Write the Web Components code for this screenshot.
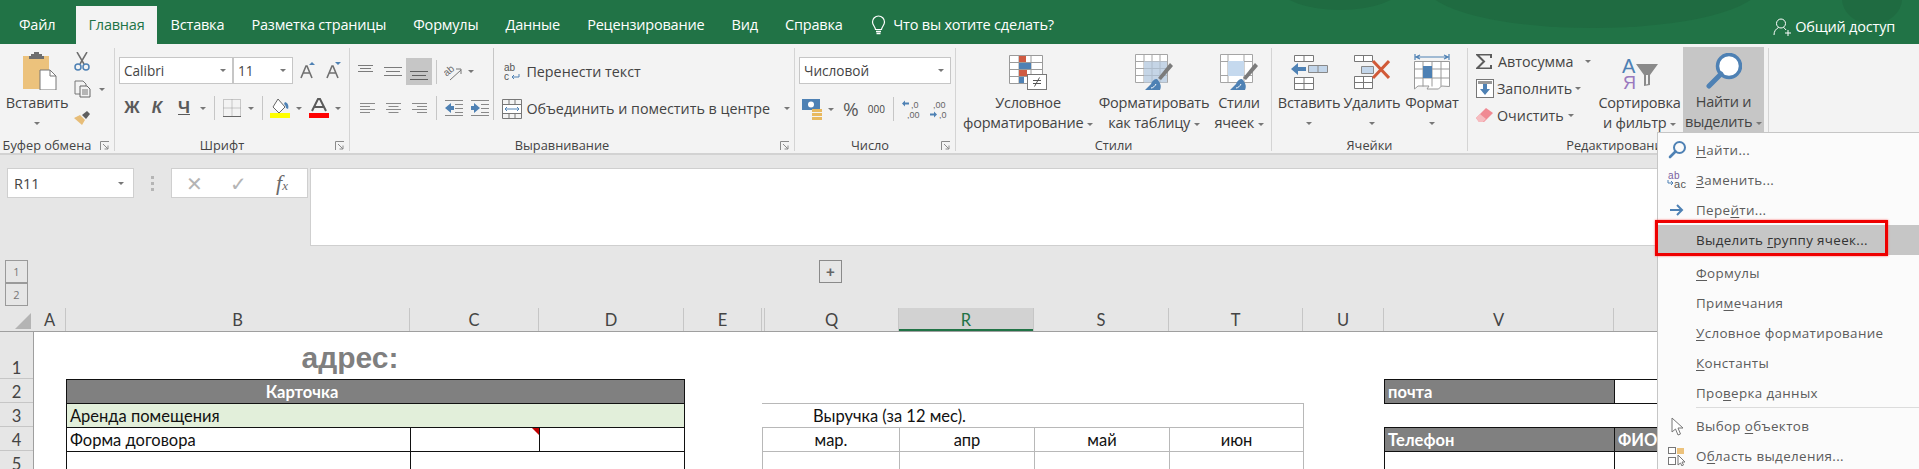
<!DOCTYPE html>
<html lang="ru">
<head>
<meta charset="utf-8">
<title>Excel</title>
<style>
  html, body { margin: 0; height: 469px; overflow: hidden; background: #e6e6e6; }
  body { font-family: "Open Sans", "Noto Sans", sans-serif; }
</style>
</head>
<body>
<xl-app></xl-app>
<script>
// small icon set, each entry is viewbox + svg body
const BLUE = '#4e81b4', LT = '#c3d6ea';
const ICONS = {
  paste: ['0 0 36 38', `<rect x="1" y="4" width="26" height="33" fill="#ecc27c"/><path d="M9 4V2h3V0h5v2h3v2h2v3H7V4z" fill="#6e6e6e"/><path d="M18 18h10l6 6v14H18z" fill="#fff" stroke="#777"/><path d="M28 18v6h6" fill="none" stroke="#777"/>`],
  cut: ['0 0 16 19', `<path d="M3 0l7 12M13 0L6 12" stroke="#6e6e6e" stroke-width="1.5" fill="none"/><circle cx="4" cy="15" r="3" fill="none" stroke="${BLUE}" stroke-width="1.5"/><circle cx="12" cy="15" r="3" fill="none" stroke="${BLUE}" stroke-width="1.5"/>`],
  copy: ['0 0 17 18', `<path d="M1 1h8l3 3v10H1z" fill="none" stroke="#777"/><path d="M6 6h7l3 3v8H6z" fill="#f3f3f3" stroke="#666"/><path d="M8 10h6M8 12h6M8 14h6" stroke="#777"/>`],
  brush: ['0 0 18 16', `<path d="M0 9l6-3 5 5-3 5z" fill="#e7bd78"/><path d="M8 6l5-4 3 3-4 5z" fill="#5f5f5f"/>`],
  grow: ['0 0 16 17', `<path d="M12 0l3 3H9z" fill="${BLUE}"/><path d="M1 16L6 4h1l5 12M3.500 11h6" fill="none" stroke="#707070" stroke-width="1.600"/>`],
  shrink: ['0 0 16 17', `<path d="M9 0h6l-3 3z" fill="${BLUE}"/><path d="M1 16L6 4h1l5 12M3.500 11h6" fill="none" stroke="#707070" stroke-width="1.600"/>`],
  borders: ['0 0 18 18', `<path d="M.5.500h17v17H.5z" fill="none" stroke="#9a9a9a" stroke-dasharray="1 1"/><path d="M9 .5v17M.5 9h17" stroke="#9a9a9a" stroke-dasharray="1 1"/><path d="M0 17.500h18" stroke="#666"/>`],
  fill: ['0 0 20 21', `<path d="M8 1l7 8-6 6-6-6z" fill="#fff" stroke="#666"/><path d="M15 4c3 1 4 4 3 7l-2-1c0-2-1-3-2-4z" fill="${BLUE}"/><rect y="15" width="20" height="5" fill="#ffff00"/>`],
  color: ['0 0 20 21', `<path d="M3 13L9 1h2l6 12M5.500 9h9" fill="none" stroke="#5a5a5a" stroke-width="2"/><rect y="15" width="20" height="5" fill="#ff0000"/>`],
  atop: ['0 0 15 8', `<path d="M0 1.500h15M2 4.500h11M0 7.500h15" stroke="#7b7b7b"/>`],
  amid: ['0 0 18 12', `<path d="M0 1.500h18M2 5.500h14M0 9.500h18" stroke="#7b7b7b"/>`],
  abot: ['0 0 18 12', `<path d="M0 1.500h18M2 5.500h14M0 9.500h18" stroke="#5f5f5f"/>`],
  orient: ['0 0 19 18', `<text x="0" y="11" font-size="10" font-family="Liberation Sans" fill="#666" transform="rotate(-40 5 9)">ab</text><path d="M6 17l11-10M12 6h5v5" fill="none" stroke="#777"/>`],
  aleft: ['0 0 15 11', `<path d="M0 .5h15M0 3.500h10M0 6.500h15M0 9.500h10" stroke="#8a8a8a"/>`],
  acenter: ['0 0 15 11', `<path d="M0 .5h15M2.500 3.500h10M0 6.500h15M2.500 9.500h10" stroke="#8a8a8a"/>`],
  aright: ['0 0 15 11', `<path d="M0 .5h15M5 3.500h10M0 6.500h15M5 9.500h10" stroke="#8a8a8a"/>`],
  outdent: ['0 0 18 16', `<path d="M0 8l6-5v3h3v4H6v3z" fill="${BLUE}"/><path d="M0 .5h18M10 4.500h8M10 8.500h8M10 12.500h8M0 15.500h18" stroke="#888"/>`],
  indent: ['0 0 18 16', `<path d="M9 8L3 3v3H0v4h3v3z" fill="${BLUE}"/><path d="M0 .5h18M10 4.500h8M10 8.500h8M10 12.500h8M0 15.500h18" stroke="#888"/>`],
  wrap: ['0 0 16 18', `<text x="0" y="8" font-size="10" font-family="Liberation Sans" fill="#555">ab</text><text x="0" y="17" font-size="10" font-family="Liberation Sans" fill="#555">c</text><path d="M15 11v3H8M10 12l-2 2 2 2" fill="none" stroke="${BLUE}"/>`],
  merge: ['0 0 20 20', `<path d="M.5.500h19v19H.5zM.5 5.500h19M.5 14.500h19M7 .5v5M13 .5v5M7 14.500v5M13 14.500v5" fill="none" stroke="#777"/><rect x="1" y="6" width="18" height="8" fill="#fff"/><path d="M3 10h14M5 8l-2 2 2 2M15 8l2 2-2 2" fill="none" stroke="${BLUE}"/>`],
  money: ['0 0 21 21', `<rect width="18" height="11" fill="${BLUE}"/><circle cx="9" cy="5.500" r="3" fill="#fff"/><rect x="10" y="10" width="10" height="3" fill="#e8b95f"/><rect x="10" y="14" width="10" height="3" fill="#e8b95f"/><rect x="10" y="18" width="10" height="3" fill="#e8b95f"/>`],
  decdec: ['0 0 18 19', `<path d="M0 3.500l3-3v2h4v2H3v2z" fill="${BLUE}"/><text x="9" y="8" font-size="9" font-family="Liberation Sans" fill="#666">,0</text><text x="5" y="18" font-size="9" font-family="Liberation Sans" fill="#666">,00</text>`],
  incdec: ['0 0 18 19', `<path d="M7 14.500l-3-3v2H0v2h4v2z" fill="${BLUE}"/><text x="3" y="8" font-size="9" font-family="Liberation Sans" fill="#666">,00</text><text x="9" y="18" font-size="9" font-family="Liberation Sans" fill="#666">,0</text>`],
  cond: ['0 0 38 35', `<path d="M.5.500h33v28H.5zM10 .5v28M22 .5v28M.5 7.500h33M.5 14.500h33M.5 21.500h33" fill="#fff" stroke="#9a9a9a"/><rect x="10" y="1" width="7" height="6" fill="#cf5b42"/><rect x="10" y="8" width="12" height="6" fill="${BLUE}"/><rect x="10" y="15" width="8" height="6" fill="#cf5b42"/><rect x="10" y="22" width="5" height="6" fill="${BLUE}"/><rect x="18.500" y="19.500" width="19" height="15" fill="#fff" stroke="#777"/><path d="M24 25.500h8M24 28.500h8M30.500 22.500l-5 9" stroke="#555" fill="none"/>`],
  table: ['0 0 38 36', `<path d="M.5.500h32v28H.5zM9 .5v28M17 .5v28M25 .5v28M.5 7.500h32M.5 14.500h32M.5 21.500h32" fill="#fff" stroke="#a5a5a5"/><path d="M9 7.500h23v21H9z" fill="#c5d5e6"/><path d="M17 7.500v21M25 7.500v21M9 14.500h23M9 21.500h23" stroke="#aebccb"/><path d="M38 12L26 26l-3-2 12-15z" fill="#7b7b7b"/><path d="M22 25c-3 0-5 2-6 5l-6 6h15c2-4 0-8-3-11z" fill="${BLUE}"/><path d="M16 34c2 0 4-2 5-4" stroke="#fff" fill="none"/>`],
  cellstyle: ['0 0 38 36', `<path d="M.5.500h32v28H.5zM8 .5v28M24 .5v28M.5 7.500h32M.5 21.500h32" fill="#fff" stroke="#a5a5a5"/><rect x="8" y="7" width="16" height="15" fill="#c5d9ee"/><path d="M38 12L26 26l-3-2 12-15z" fill="#7b7b7b"/><path d="M22 25c-3 0-5 2-6 5l-6 6h15c2-4 0-8-3-11z" fill="${BLUE}"/><path d="M16 34c2 0 4-2 5-4" stroke="#fff" fill="none"/>`],
  cellins: ['0 0 37 35', `<path d="M3.500.500h19v6h-19zM13 .5v6M3.500 22.500h19v12h-19zM3.500 28.500h19M13 22.500v12" fill="#fff" stroke="#777"/><path d="M0 14l7-6v4h8v4H7v4z" fill="${BLUE}"/><path d="M17.500 10.500h19v7h-19zM27 10.500v7" fill="${LT}" stroke="#888"/>`],
  celldel: ['0 0 36 35', `<path d="M.5.500h18v6H.5zM9.500.500v6M.5 21.500h18v12H.5zM.5 27.500h18M9.500 21.500v12" fill="#fff" stroke="#777"/><path d="M7.500 11.500h12v7h-12z" fill="${LT}" stroke="#888"/><path d="M19 6l16 17M35 6L19 23" stroke="#d15a38" stroke-width="3"/>`],
  cellfmt: ['0 0 36 38', `<path d="M1 2v6M35 2v6M2 5h32M6 3L2 5l4 2M30 3l4 2-4 2" fill="none" stroke="${BLUE}" stroke-width="1.200"/><path d="M.5 9.500h35v25l-8-.5-3 3H13l2-3H4l-3.500 3zM9 9.500v25M18 9.500v25M27 9.500v25M.5 17h35M.5 26h35" fill="#fff" stroke="#999"/><rect x="9" y="14" width="9" height="12" fill="${BLUE}"/>`],
  sigma: ['0 0 16 15', `<path d="M15 4V.5H1L8 7.500 1 14.500h14V11" fill="none" stroke="#5c5c5c" stroke-width="2"/>`],
  filldown: ['0 0 18 19', `<rect x=".5" y=".5" width="17" height="18" fill="#fff" stroke="#777"/><rect x="2" y="2" width="14" height="3" fill="#999"/><path d="M9 16l-5-6h3V5h4v5h3z" fill="${BLUE}"/>`],
  eraser: ['0 0 17 15', `<path d="M0 10L10 0l7 5-9 9H3z" fill="#f08a93"/><path d="M0 10l4-4 6 5-3 3H3z" fill="#f6bcc0"/>`],
  sort: ['0 0 37 33', `<text x="1" y="16" font-size="20" font-family="Liberation Sans" fill="${BLUE}">А</text><text x="2" y="32" font-size="18" font-family="Liberation Sans" fill="#9a79be">Я</text><path d="M15 7h22l-8 11v10l-6 1V18z" fill="#8a8a8a"/><path d="M25 18h2v9l-2 .5z" fill="#f3f3f3"/>`],
  find: ['0 0 36 36', `<circle cx="23" cy="13" r="11.500" fill="#fff" stroke="${BLUE}" stroke-width="3.500"/><path d="M15 21L3 33" stroke="${BLUE}" stroke-width="5" stroke-linecap="round"/>`],
  findsm: ['0 0 18 18', `<circle cx="11.500" cy="6.500" r="5.500" fill="none" stroke="${BLUE}" stroke-width="2"/><path d="M7.500 10.500L2 16" stroke="${BLUE}" stroke-width="2.600" stroke-linecap="round"/>`],
  replace: ['0 0 20 18', `<text x="1" y="7.500" font-size="10" font-family="Liberation Sans" fill="#7a5fa0">ab</text><text x="7" y="17" font-size="11" font-family="Liberation Sans" fill="#555">ac</text><path d="M1 9v3h5M4 10l2 2-2 2" fill="none" stroke="${BLUE}"/>`],
  arrow: ['0 0 14 12', `<path d="M0 6h12M7 1l5 5-5 5" fill="none" stroke="${BLUE}" stroke-width="2"/>`],
  pointer: ['0 0 13 19', `<path d="M1 1v14l3.500-3 2.500 6 2.500-1-2.500-6h5z" fill="#fff" stroke="#777"/>`],
  selpane: ['0 0 18 19', `<rect x=".5" y=".5" width="7" height="6" fill="#fff" stroke="#777"/><rect x="9" y="1" width="7" height="6" fill="#ecc27c"/><rect x=".5" y="10.500" width="7" height="7" fill="#fff" stroke="#777"/><path d="M10 8v10l2.500-2 1.500 3 1.500-1-1.500-3h3z" fill="#fff" stroke="#777"/>`],
  bulb: ['0 0 15 20', `<path d="M7.500 1A6 6 0 0 0 1.500 7c0 3 2.500 4.500 3 7.500h6c.5-3 3-4.500 3-7.500a6 6 0 0 0-6-6z" fill="none" stroke="#fff" stroke-width="1.200"/><path d="M5 16.500h5M5.500 18.500h4" stroke="#fff" stroke-width="1.300"/>`],
  person: ['0 0 18 18', `<circle cx="8" cy="5.500" r="4.500" fill="none" stroke="#fff"/><path d="M1 17c0-4 2-6 4.500-7.500M10.500 9.500c1 .5 2 1.500 2.500 2.500M12 15h6M15 12v6" fill="none" stroke="#fff"/>`],
  launcher: ['0 0 10 10', `<path d="M.5 9V.5H9M3 3l5 5M8 4.500V8H4.500" fill="none" stroke="#8a8a8a"/>`]
};

class XlIcon extends HTMLElement {
  connectedCallback() {
    const [vb, body] = ICONS[this.getAttribute('name')];
    const [, , w, h] = vb.split(' ');
    this.attachShadow({ mode: 'open' }).innerHTML = `
      <style>:host { display: inline-flex; flex: none; } svg { display: block; }</style>
      <svg xmlns="http://www.w3.org/2000/svg" viewBox="${vb}" width="${w}" height="${h}">${body}</svg>`;
  }
}

class XlDrop extends HTMLElement {
  connectedCallback() {
    this.attachShadow({ mode: 'open' }).innerHTML = `
      <style>:host { display: inline-block; flex: none; width: 0; height: 0; border: 3px solid transparent; border-top: 3px solid #777; border-bottom: 0; vertical-align: middle; }</style>`;
  }
}

class XlTitlebar extends HTMLElement {
  connectedCallback() {
    this.attachShadow({ mode: 'open' }).innerHTML = `
      <style>
        :host { display: flex; height: 44px; background: #217346; color: #fff; font: 14.5px/1 "Open Sans", sans-serif; position: relative; overflow: hidden; align-items: flex-end; letter-spacing: -.2px; }
        .tab { height: 38px; display: flex; align-items: center; padding: 0 13.6px; box-sizing: border-box; white-space: nowrap; position: relative; }
        .on { background: #f3f3f3; color: #217346; width: 81px; justify-content: center; padding: 0; }
        .file { width: 76px; padding: 0 0 0 19px; }
        .tell { display: flex; align-items: center; gap: 7px; margin-left: 15px; height: 38px; white-space: nowrap; position: relative; }
        .blob { position: absolute; background: #1f6b41; border-radius: 50%; }
        .share { margin-left: auto; display: flex; align-items: center; gap: 4px; height: 34px; padding-right: 24px; position: relative; }
      </style>
      <div class="blob" style="left:1426px;top:-56px;width:334px;height:84px"></div>
      <div class="blob" style="left:1280px;top:-34px;width:120px;height:44px"></div>
      <div class="blob" style="left:1842px;top:-26px;width:60px;height:50px"></div>
      <div class="tab file">Файл</div><div class="tab on">Главная</div>
      <div class="tab">Вставка</div><div class="tab">Разметка страницы</div><div class="tab">Формулы</div>
      <div class="tab">Данные</div><div class="tab">Рецензирование</div><div class="tab">Вид</div><div class="tab">Справка</div>
      <div class="tell"><xl-icon name="bulb"></xl-icon>Что вы хотите сделать?</div>
      <div class="share"><xl-icon name="person"></xl-icon>Общий доступ</div>`;
  }
}

// one ribbon group: content slot on top, caption below and the thin divider on its right
class XlGroup extends HTMLElement {
  connectedCallback() {
    const launcher = this.hasAttribute('launcher');
    this.attachShadow({ mode: 'open' }).innerHTML = `
      <style>
        :host { display: flex; flex-direction: column; flex: none; box-sizing: border-box; position: relative; height: 103px; margin-top: 4px; border-right: 1px solid #d4d4d4; }
        .body { flex: 1; display: flex; min-height: 0; }
        .cap { height: 14px; margin-bottom: -1px; display: flex; align-items: center; justify-content: center; font-size: 12.8px; color: #444; white-space: nowrap; }
        xl-icon { position: absolute; right: 4px; bottom: 0; }
      </style>
      <div class="body"><slot></slot></div>
      <div class="cap" style="padding-right:${this.getAttribute('pad') || 0}px">${this.getAttribute('label')}</div>
      ${launcher ? '<xl-icon name="launcher"></xl-icon>' : ''}`;
  }
}

// tall ribbon button: icon, then one or two text lines, then optional arrow line
class XlBig extends HTMLElement {
  connectedCallback() {
    const lines = this.getAttribute('text').split('|');
    const on = this.hasAttribute('on');
    const below = this.hasAttribute('below');
    const labels = lines.map((t, i) => {
      const last = i === lines.length - 1;
      return `<div class="ln">${t}${last && !below ? ' <xl-drop></xl-drop>' : ''}</div>`;
    }).join('');
    this.attachShadow({ mode: 'open' }).innerHTML = `
      <style>
        :host { display: flex; flex-direction: column; align-items: center; flex: none; box-sizing: border-box; width: var(--w, 60px); height: 85px; color: #444; font-size: 14.5px; letter-spacing: -.2px; background: ${on ? '#c6c6c6' : 'transparent'}; }
        .ic { height: 45px; display: flex; align-items: flex-end; justify-content: center; padding-bottom: 3px; box-sizing: border-box; flex: none; }
        .ln { height: 20px; line-height: 20px; white-space: nowrap; text-align: center; flex: none; }
        .dr { height: 20px; display: flex; align-items: center; }
      </style>
      <div class="ic"><slot></slot></div>${labels}
      ${below ? '<div class="dr"><xl-drop></xl-drop></div>' : ''}`;
  }
}

class XlCombo extends HTMLElement {
  connectedCallback() {
    this.attachShadow({ mode: 'open' }).innerHTML = `
      <style>
        :host { display: flex; align-items: center; justify-content: space-between; box-sizing: border-box; height: 27px; background: #fff; border: 1px solid #c6c6c6; padding: 0 6px 0 4px; font-size: 13.6px; color: #444; width: var(--w, 100px); flex: none; }
      </style>
      <span><slot></slot></span><xl-drop></xl-drop>`;
  }
}

class XlTool extends HTMLElement {
  connectedCallback() {
    this.attachShadow({ mode: 'open' }).innerHTML = `
      <style>
        :host { display: flex; align-items: center; justify-content: center; flex: none; box-sizing: border-box; height: var(--h, 26px); min-width: var(--w, 0); color: #444; }
        :host([on]) { background: #c6c6c6; }
      </style><slot></slot>`;
  }
}

class XlSep extends HTMLElement {
  connectedCallback() {
    this.attachShadow({ mode: 'open' }).innerHTML = `
      <style>:host { display: block; width: 1px; height: var(--h, 24px); background: #c6c6c6; flex: none; margin: 0 var(--m, 8px); }</style>`;
  }
}

class XlRibbon extends HTMLElement {
  connectedCallback() {
    this.attachShadow({ mode: 'open' }).innerHTML = `
      <style>
        :host { display: flex; height: 111px; box-sizing: border-box; background: #f3f3f3; border-bottom: 2px solid #d2d2d2; color: #444; font-size: 14.3px; }
        .col { display: flex; flex-direction: column; }
        .row { display: flex; align-items: center; }
        .btn { font-weight: bold; font-family: "Liberation Sans", sans-serif; font-size: 17px; color: #5a5a5a; text-align: center; }
        .lbl { white-space: nowrap; color: #444; }
      </style>
      <xl-group label="Буфер обмена" launcher pad="20" style="width:115px">
        <div class="row" style="align-items:flex-start;width:114px">
          <xl-big text="Вставить" below style="--w:74px"><xl-icon name="paste" style="margin-left:5px"></xl-icon></xl-big>
          <div class="col" style="gap:10px;padding-top:4px">
            <xl-tool style="--h:18px;justify-content:flex-start"><xl-icon name="cut"></xl-icon></xl-tool>
            <xl-tool style="--h:18px;justify-content:flex-start"><xl-icon name="copy"></xl-icon><xl-drop style="margin-left:8px"></xl-drop></xl-tool>
            <xl-tool style="--h:18px;justify-content:flex-start"><xl-icon name="brush"></xl-icon></xl-tool>
          </div>
        </div>
      </xl-group>
      <xl-group label="Шрифт" launcher pad="20" style="width:235px">
        <div class="col" style="padding:9px 0 0 4px;gap:12px;width:230px">
          <div class="row">
            <xl-combo style="--w:114px">Calibri</xl-combo><xl-combo style="--w:60px">11</xl-combo>
            <xl-tool style="--w:26px;margin-left:2px"><xl-icon name="grow"></xl-icon></xl-tool>
            <xl-tool style="--w:26px"><xl-icon name="shrink"></xl-icon></xl-tool>
          </div>
          <div class="row">
            <span class="btn" style="width:26px">Ж</span>
            <span class="btn" style="width:24px;font-style:italic">К</span>
            <span class="btn" style="width:30px;text-decoration:underline">Ч</span>
            <xl-drop style="margin-left:1px"></xl-drop>
            <xl-sep></xl-sep>
            <xl-icon name="borders"></xl-icon><xl-drop style="margin-left:7px"></xl-drop>
            <xl-sep style="--m:7px;margin-left:8px"></xl-sep>
            <xl-icon name="fill"></xl-icon><xl-drop style="margin-left:6px"></xl-drop>
            <xl-icon name="color" style="margin-left:7px"></xl-icon><xl-drop style="margin-left:6px"></xl-drop>
          </div>
        </div>
      </xl-group>
      <xl-group label="Выравнивание" launcher pad="20" style="width:445px">
        <div class="row" style="align-items:flex-start;width:440px">
          <div class="col" style="padding:10px 0 0 2px;gap:10px;width:147px;box-sizing:border-box;border-right:1px solid #c6c6c6;height:72px">
            <div class="row">
              <xl-tool style="--w:26px"><xl-icon name="atop" style="margin-top:-8px"></xl-icon></xl-tool>
              <xl-tool style="--w:26px;margin-left:2px"><xl-icon name="amid"></xl-icon></xl-tool>
              <xl-tool on style="--w:26px;--h:27px"><xl-icon name="abot" style="margin-top:8px"></xl-icon></xl-tool>
              <xl-sep style="--m:4px"></xl-sep>
              <xl-icon name="orient" style="margin-left:3px"></xl-icon><xl-drop style="margin-left:5px"></xl-drop>
            </div>
            <div class="row" style="padding-left:2px">
              <xl-tool style="--w:26px"><xl-icon name="aleft"></xl-icon></xl-tool>
              <xl-tool style="--w:26px"><xl-icon name="acenter"></xl-icon></xl-tool>
              <xl-tool style="--w:26px"><xl-icon name="aright"></xl-icon></xl-tool>
              <xl-sep style="--m:4px"></xl-sep>
              <xl-icon name="outdent" style="margin-left:4px"></xl-icon>
              <xl-icon name="indent" style="margin-left:8px"></xl-icon>
            </div>
          </div>
          <div class="col" style="padding:10px 0 0 8px;gap:10px">
            <div class="row lbl" style="height:27px;gap:6px;padding-left:2px"><xl-icon name="wrap"></xl-icon>Перенести текст</div>
            <div class="row lbl" style="height:27px;gap:4px"><xl-icon name="merge"></xl-icon>Объединить и поместить в центре<xl-drop style="margin-left:10px"></xl-drop></div>
          </div>
        </div>
      </xl-group>
      <xl-group label="Число" launcher pad="10" style="width:161px">
        <div class="col" style="padding:9px 0 0 4px;gap:12px;width:156px">
          <xl-combo style="--w:152px">Числовой</xl-combo>
          <div class="row" style="padding-left:3px">
            <xl-icon name="money"></xl-icon><xl-drop style="margin-left:5px"></xl-drop>
            <span class="lbl" style="font-size:19px;margin-left:9px;color:#5a5a5a">%</span>
            <span class="lbl" style="font-size:10px;margin-left:9px">000</span>
            <xl-sep></xl-sep>
            <xl-icon name="decdec"></xl-icon><xl-icon name="incdec" style="margin-left:10px"></xl-icon>
          </div>
        </div>
      </xl-group>
      <xl-group label="Стили" style="width:316px">
        <div class="row" style="align-items:flex-start;width:315px">
          <xl-big text="Условное|форматирование" style="--w:144px"><xl-icon name="cond"></xl-icon></xl-big>
          <xl-big text="Форматировать|как таблицу" style="--w:108px"><xl-icon name="table"></xl-icon></xl-big>
          <xl-big text="Стили|ячеек" style="--w:62px"><xl-icon name="cellstyle"></xl-icon></xl-big>
        </div>
      </xl-group>
      <xl-group label="Ячейки" style="width:196px">
        <div class="row" style="align-items:flex-start;width:195px;padding-left:6px;box-sizing:border-box">
          <xl-big text="Вставить" below style="--w:62px"><xl-icon name="cellins"></xl-icon></xl-big>
          <xl-big text="Удалить" below style="--w:64px"><xl-icon name="celldel"></xl-icon></xl-big>
          <xl-big text="Формат" below style="--w:56px"><xl-icon name="cellfmt"></xl-icon></xl-big>
        </div>
      </xl-group>
      <xl-group label="Редактирование" style="width:301px">
        <div class="row" style="align-items:flex-start;width:300px">
          <div class="col" style="padding:2px 0 0 8px;width:128px;box-sizing:border-box;gap:5px">
            <div class="row lbl" style="height:22px;gap:6px"><xl-icon name="sigma"></xl-icon>Автосумма<xl-drop style="margin-left:5px"></xl-drop></div>
            <div class="row lbl" style="height:22px;gap:3px"><xl-icon name="filldown"></xl-icon>Заполнить<xl-drop></xl-drop></div>
            <div class="row lbl" style="height:22px;gap:4px"><xl-icon name="eraser"></xl-icon>Очистить<xl-drop></xl-drop></div>
          </div>
          <xl-big text="Сортировка|и фильтр" style="--w:87px"><xl-icon name="sort"></xl-icon></xl-big>
          <xl-big text="Найти и|выделить" on style="--w:81px;margin-top:-1px"><xl-icon name="find"></xl-icon></xl-big>
        </div>
      </xl-group>`;
  }
}

class XlFormula extends HTMLElement {
  connectedCallback() {
    this.attachShadow({ mode: 'open' }).innerHTML = `
      <style>
        :host { display: block; height: 153px; background: #e6e6e6; box-sizing: border-box; padding-top: 13px; }
        .bar { display: flex; align-items: flex-start; height: 78px; padding-left: 7px; }
        .name { width: 127px; height: 30px; box-sizing: border-box; background: #fff; border: 1px solid #cfcfcf; display: flex; align-items: center; justify-content: space-between; padding: 0 9px 0 6px; font-size: 14.5px; color: #444; flex: none; }
        .dots { width: 37px; height: 30px; display: flex; flex-direction: column; align-items: center; justify-content: center; gap: 3px; flex: none; }
        .dots i { width: 3px; height: 3px; background: #b5b5b5; }
        .fx { width: 137px; height: 30px; box-sizing: border-box; background: #fff; border: 1px solid #cfcfcf; display: flex; align-items: center; flex: none; margin-right: 2px; color: #b4b4b4; }
        .fx span { width: 44px; text-align: center; font-size: 20px; }
        .fx em { font: italic 22px "Liberation Serif", serif; color: #6a6a6a; width: 44px; text-align: center; }
        .fx small { font-size: 13px; }
        .input { flex: 1; height: 78px; box-sizing: border-box; background: #fff; border: 1px solid #cfcfcf; border-right: 0; }
        .outline { display: flex; align-items: flex-start; height: 62px; padding: 14px 0 0 5px; box-sizing: border-box; }
        .levels { display: flex; flex-direction: column; width: 23px; flex: none; }
        .levels b { height: 21px; border: 1px solid #9a9a9a; font-weight: 400; font-size: 11px; color: #777; display: flex; align-items: center; justify-content: center; width: 21px; }
        .plus { width: 21px; height: 21px; border: 1px solid #8a8a8a; margin-left: 791px; display: flex; align-items: center; justify-content: center; font: bold 15px/1 "Liberation Sans", sans-serif; color: #666; flex: none; }
      </style>
      <div class="bar">
        <div class="name">R11<xl-drop></xl-drop></div>
        <div class="dots"><i></i><i></i><i></i></div>
        <div class="fx"><span>✕</span><span>✓</span><em>f<small>x</small></em></div>
        <div class="input"></div>
      </div>
      <div class="outline">
        <div class="levels"><b>1</b><b>2</b></div>
        <div class="plus">+</div>
      </div>`;
  }
}

// the worksheet is a real grid: one template for the column headers and the cells
const COLS = [['A',32],['B',344],['C',129],['D',145],['E',78],['',3],['Q',134],['R',135],['S',135],['T',134],['U',81],['V',230],['W',305]];
const TRACKS = COLS.map(c => c[1] + 'px').join(' ');

class XlSheet extends HTMLElement {
  connectedCallback() {
    const head = COLS.map(c => `<div class="ch${c[0] === 'R' ? ' sel' : ''}">${c[0]}</div>`).join('');
    const rowNums = [[1,47],[2,24],[3,24],[4,24],[5,24]].map(r => `<div class="rh" style="height:${r[1]}px">${r[0]}</div>`).join('');
    const c = (col, span, row, cls, txt = '') => `<div class="c ${cls}" style="grid-column:${col}/span ${span};grid-row:${row}">${txt}</div>`;
    const cells = [
      c(1, 4, 1, 'addr', 'адрес:'),
      c(2, 3, 2, 'dark center k', 'Карточка'),
      c(2, 3, 3, 'green bl', 'Аренда помещения'),
      c(2, 1, 4, 'bl', 'Форма договора'),
      c(3, 1, 4, 'bl note'),
      c(4, 1, 4, 'bl'),
      c(2, 1, 5, 'bl'),
      c(3, 2, 5, 'bl'),
      c(12, 1, 2, 'dark', 'почта'),
      c(13, 1, 2, 'bl'),
      c(6, 5, 3, 'gl vy', 'Выручка (за 12 мес).'),
      c(6, 2, 4, 'gl center', 'мар.'),
      c(8, 1, 4, 'gl center', 'апр'),
      c(9, 1, 4, 'gl center', 'май'),
      c(10, 1, 4, 'gl center', 'июн'),
      c(6, 2, 5, 'gl'), c(8, 1, 5, 'gl'), c(9, 1, 5, 'gl'), c(10, 1, 5, 'gl'),
      c(12, 1, 4, 'dark', 'Телефон'),
      c(13, 1, 4, 'dark', 'ФИО'),
      c(12, 1, 5, 'bl'), c(13, 1, 5, 'bl')
    ].join('');
    this.attachShadow({ mode: 'open' }).innerHTML = `
      <style>
        :host { display: block; font: 16.5px Lato, "Open Sans", sans-serif; }
        .head { display: grid; grid-template-columns: 34px ${TRACKS}; height: 24px; background: #e6e6e6; border-bottom: 1px solid #9f9f9f; box-sizing: border-box; }
        .corner { position: relative; }
        .corner::after { content: ""; position: absolute; left: 15px; top: 5px; border-style: solid; border-width: 0 0 16px 16px; border-color: transparent transparent #b4b4b4 transparent; }
        .ch { display: flex; align-items: center; justify-content: center; border-right: 1px solid #c6c6c6; color: #444; }
        .sel { background: #d2d2d2; color: #217346; box-shadow: inset 0 -2px 0 #217346; }
        .bodywrap { display: flex; background: #fff; height: 137px; }
        .rows { width: 34px; flex: none; background: #e6e6e6; border-right: 1px solid #9f9f9f; box-sizing: border-box; }
        .rh { display: flex; align-items: flex-end; justify-content: center; box-sizing: border-box; border-bottom: 1px solid #c6c6c6; color: #444; }
        .cells { display: grid; grid-template-columns: ${TRACKS}; grid-template-rows: 47px 24px 24px 24px 24px; }
        .c { box-sizing: border-box; min-width: 0; display: flex; align-items: center; padding: 0 3px; color: #111; white-space: nowrap; }
        .dark { background: #808080; color: #fff; font-weight: bold; border: 1px solid #111; margin: 0 -1px -1px 0; }
        .bl { border: 1px solid #111; margin: 0 -1px -1px 0; }
        .green { background: #e2efda; }
        .gl { border: 1px solid #b8b8b8; margin: 0 -1px -1px 0; }
        .center { justify-content: center; }
        .k { padding-right: 150px; }
        .vy { padding-left: 51px; border-left: 0; }
        .addr { font: bold 30px "Liberation Sans", sans-serif; color: #7f7f7f; justify-content: center; align-items: flex-end; padding: 0 18px 4px 0; }
        .note { position: relative; }
        .note::after { content: ""; position: absolute; right: 0; top: 0; border-style: solid; border-width: 0 7px 7px 0; border-color: transparent #c00000 transparent transparent; }
      </style>
      <div class="head"><div class="corner"></div>${head}</div>
      <div class="bodywrap">
        <div class="rows">${rowNums}</div>
        <div class="cells">${cells}</div>
      </div>`;
  }
}

class XlMenuItem extends HTMLElement {
  connectedCallback() {
    const ic = this.getAttribute('icon');
    this.attachShadow({ mode: 'open' }).innerHTML = `
      <style>
        :host { display: flex; align-items: center; height: 30px; color: #5c5c5c; letter-spacing: .35px; font-size: 13.4px; white-space: nowrap; }
        :host([on]) { background: #c6c6c6; color: #333; margin-bottom: 3px; }
        .i { width: 38px; display: flex; justify-content: center; flex: none; }
        ::slotted(u) { text-underline-offset: 2px; }
      </style>
      <div class="i">${ic ? `<xl-icon name="${ic}"></xl-icon>` : ''}</div><span><slot></slot></span>`;
  }
}

class XlMenu extends HTMLElement {
  connectedCallback() {
    this.attachShadow({ mode: 'open' }).innerHTML = `
      <style>
        :host { display: block; position: absolute; left: 1657px; top: 132px; width: 262px; height: 337px; box-sizing: border-box; background: #fbfbfb; border: 1px solid #c6c6c6; border-right: 0; border-bottom: 0; padding-top: 2px; overflow: hidden; }
      </style>
      <slot></slot>`;
  }
}

class XlRedBox extends HTMLElement {
  connectedCallback() {
    this.attachShadow({ mode: 'open' }).innerHTML = `
      <style>:host { display: block; position: absolute; left: 1655px; top: 220px; width: 233px; height: 36px; box-sizing: border-box; border: 3px solid #ee0000; box-shadow: 0 0 2px #ff6060; pointer-events: none; }</style>`;
  }
}

class XlApp extends HTMLElement {
  connectedCallback() {
    this.attachShadow({ mode: 'open' }).innerHTML = `
      <style>
        :host { display: block; position: relative; width: 1919px; height: 469px; overflow: hidden; font-family: "Open Sans", sans-serif; }
        hr { border: 0; height: 1px; background: #dcdcdc; margin: -1px 0 3px 38px; }
      </style>
      <xl-titlebar></xl-titlebar>
      <xl-ribbon></xl-ribbon>
      <xl-formula></xl-formula>
      <xl-sheet></xl-sheet>
      <xl-menu>
        <xl-menu-item icon="findsm"><u>Н</u>айти...</xl-menu-item>
        <xl-menu-item icon="replace"><u>З</u>аменить...</xl-menu-item>
        <xl-menu-item icon="arrow">Пере<u>й</u>ти...</xl-menu-item>
        <xl-menu-item on>Выделить <u>г</u>руппу ячеек...</xl-menu-item>
        <xl-menu-item><u>Ф</u>ормулы</xl-menu-item>
        <xl-menu-item>При<u>м</u>ечания</xl-menu-item>
        <xl-menu-item><u>У</u>словное форматирование</xl-menu-item>
        <xl-menu-item><u>К</u>онстанты</xl-menu-item>
        <xl-menu-item>Про<u>в</u>ерка данных</xl-menu-item>
        <hr>
        <xl-menu-item icon="pointer">Выбор <u>о</u>бъектов</xl-menu-item>
        <xl-menu-item icon="selpane">О<u>б</u>ласть выделения...</xl-menu-item>
      </xl-menu>
      <xl-redbox></xl-redbox>`;
  }
}

customElements.define('xl-icon', XlIcon);
customElements.define('xl-drop', XlDrop);
customElements.define('xl-titlebar', XlTitlebar);
customElements.define('xl-group', XlGroup);
customElements.define('xl-big', XlBig);
customElements.define('xl-combo', XlCombo);
customElements.define('xl-tool', XlTool);
customElements.define('xl-sep', XlSep);
customElements.define('xl-ribbon', XlRibbon);
customElements.define('xl-formula', XlFormula);
customElements.define('xl-sheet', XlSheet);
customElements.define('xl-menu-item', XlMenuItem);
customElements.define('xl-menu', XlMenu);
customElements.define('xl-redbox', XlRedBox);
customElements.define('xl-app', XlApp);
</script>
</body>
</html>
